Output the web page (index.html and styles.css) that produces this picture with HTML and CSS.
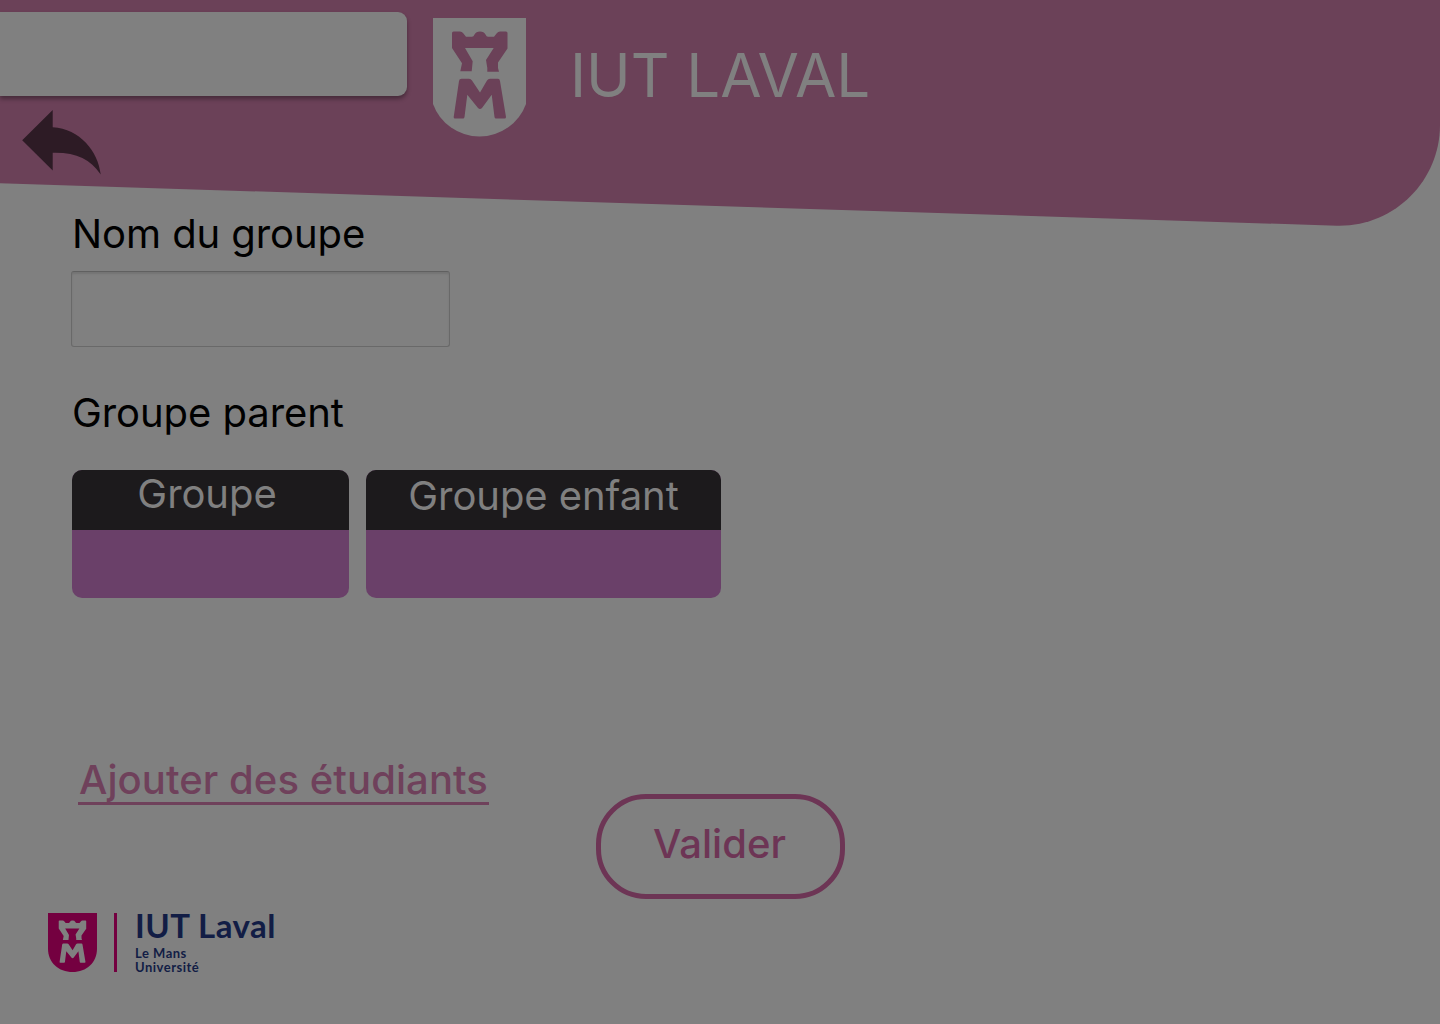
FILE: index.html
```html
<!DOCTYPE html>
<html lang="fr">
<head>
<meta charset="utf-8">
<title>IUT Laval – Groupe</title>
<link rel="stylesheet" href="styles.css">
</head>
<body>
<svg class="defs" width="0" height="0" aria-hidden="true">
  <symbol id="tower" viewBox="0 0 93 119">
    <path d="M20.500 13.500H27Q29 13.500 30 15L33 18.700H39Q40.500 18.700 41.500 16.500 43 13.500 47 13.500T52.500 16.500Q53.500 18.700 55 18.700H61L64 15Q65 13.500 67 13.500H73Q74.500 13.500 74.500 15V30.500L65 44.500V50L66 53.700H54.300V50L53 42 60.700 30H32L39.700 43.300 38.700 53.300H27.300L29 45.300 19 30V15Q19 13.500 20.500 13.500z"/>
    <path d="M28.500 60.700H36Q38 60.700 39 62.500L47 74.500 54 62.500Q55 60.700 57 60.700H65Q66.700 60.700 67 63L73 99Q73 100.500 71.500 100.500H63Q61.700 100.500 61.500 99L58.700 76.700 49 90Q47 92 45 90L34.300 76.700 31.500 99Q31.300 100.500 30 100.500H22Q20.500 100.500 20.700 99L26 63Q26.300 60.700 28.500 60.700z"/>
  </symbol>
  <symbol id="shield" viewBox="0 0 93 119">
    <path d="M0 0H93V86A49.500 49.500 0 0 1 0 86z"/>
  </symbol>
</svg>

<header class="header">
  <div class="header-row">
    <div class="search"></div>
    <svg class="crest" viewBox="0 0 93 119">
      <use href="#shield" class="crest-shield"/>
      <use href="#tower" class="crest-tower"/>
    </svg>
    <h1 class="title">IUT LAVAL</h1>
  </div>
  <svg class="back" viewBox="0 0 80 66"><path d="M.2 30.300 30.700 0V17.200C58 19 76 41 78.700 64.500 68 49 54 42.200 30.700 42.800V60.500z"/></svg>
</header>

<main class="form">
  <label class="label" for="name">Nom du groupe</label>
  <input class="field" id="name" type="text">
  <p class="label parent">Groupe parent</p>
  <div class="cards">
    <div class="card group"><div class="card-head">Groupe</div></div>
    <div class="card child"><div class="card-head">Groupe enfant</div></div>
  </div>
  <a class="link">Ajouter des étudiants</a>
  <button class="submit">Valider</button>
</main>

<footer class="footer">
  <svg class="foot-crest" viewBox="0 0 93 119" preserveAspectRatio="none">
    <path class="foot-shield" d="M0 0H93V72C93 100 73 119 46.500 119S0 100 0 72z"/>
    <use href="#tower" class="foot-tower" transform="translate(2.500 2) scale(.94 .98)"/>
  </svg>
  <span class="bar"></span>
  <div class="brand">
    <span class="brand-name">IUT Laval</span>
    <span class="brand-sub">Le Mans</span>
    <span class="brand-sub">Université</span>
  </div>
</footer>
</body>
</html>
```

FILE: styles.css
```css
* { box-sizing: border-box; }
body {
  margin: 0;
  width: 1440px;
  height: 1024px;
  overflow: hidden;
  background: #808080;
  font-family: Inter, "Liberation Sans", sans-serif;
  color: #000;
  display: flex;
  flex-direction: column;
}
.defs { position: absolute; }

.header {
  height: 210px;
  flex: none;
  position: relative;
  display: flex;
  flex-direction: column;
}
.header::before {
  content: "";
  position: absolute;
  inset: 0 0 -20px;
  z-index: -1;
  background: #6b4158;
  clip-path: path("M0 0H1440V125C1440 181 1394 227 1337 225.700L0 183.300Z");
}
.header-row { display: flex; height: 110px; flex: none; }
.search {
  width: 407px;
  height: 84px;
  margin-top: 12px;
  background: #808080;
  border-radius: 0 9px 9px 0;
  box-shadow: 0 3px 4px rgba(0, 0, 0, .35);
}
.crest { width: 93px; height: 119px; margin: 18px 0 0 26px; flex: none; }
.crest-shield { fill: #808080; }
.crest-tower { fill: #6b4158; }
.title {
  margin: 39px 0 0 44px;
  font-size: 60px;
  line-height: 72px;
  height: 72px;
  font-weight: 400;
  color: #808080;
  white-space: nowrap;
}
.back { width: 80px; height: 66px; margin: 0 0 0 22px; fill: #2d1b25; }

.form { padding-left: 71px; height: 703px; flex: none; display: flex; flex-direction: column; align-items: flex-start; }
.label { margin: 0 0 0 1px; font-size: 40px; line-height: 48px; height: 48px; letter-spacing: -.07px; white-space: nowrap; }
.field {
  width: 379px;
  height: 76px;
  margin: 13px 0 0;
  border: 1px solid #696969;
  border-top-color: #606060;
  border-radius: 3px;
  background: #808080;
  box-shadow: inset 0 2px 2px rgba(0, 0, 0, .1);
  font: inherit;
  outline: none;
}
.parent { margin-top: 42px; }
.cards { display: flex; gap: 17px; margin: 33px 0 0 1px; }
.card { height: 128px; border-radius: 10px; overflow: hidden; background: #6a4069; }
.group { width: 277px; }
.child { width: 355px; }
.card-head {
  height: 60px;
  background: #1c1a1c;
  color: #808080;
  font-size: 40px;
  line-height: 48px;
  letter-spacing: -.07px;
  text-align: center;
  white-space: nowrap;
}
.group .card-head { padding-right: 7px; }
.child .card-head { padding-top: 2px; }
.link {
  margin: 158px 0 0 7px;
  width: 411px;
  height: 49px;
  padding-left: 1px;
  border-bottom: 3px solid #6f415b;
  color: #6f415b;
  font-size: 40px;
  line-height: 48px;
  font-weight: 500;
  letter-spacing: .07px;
  white-space: nowrap;
}
.submit {
  width: 249px;
  height: 105px;
  margin: -11px 0 0 525px;
  padding: 0 2px 5px 0;
  border: 5px solid #6d3555;
  border-radius: 50px;
  background: transparent;
  color: #6d3555;
  font: 500 40px/48px Inter, "Liberation Sans", sans-serif;
}

.footer { display: flex; padding-left: 48px; height: 60px; flex: none; }
.foot-crest { width: 49px; height: 59px; }
.foot-shield { fill: #740040; }
.foot-tower { fill: #808080; }
.bar { width: 3px; height: 59px; margin-left: 17px; background: #740040; }
.brand { margin-left: 18px; display: flex; flex-direction: column; font-family: Lato, sans-serif; font-weight: 700; color: #121d45; white-space: nowrap; }
.brand-name { font-size: 33px; line-height: 42px; height: 42px; margin-top: -9px; letter-spacing: .5px; }
.brand-sub { font-size: 13px; line-height: 14px; height: 14px; letter-spacing: .5px; }
```
